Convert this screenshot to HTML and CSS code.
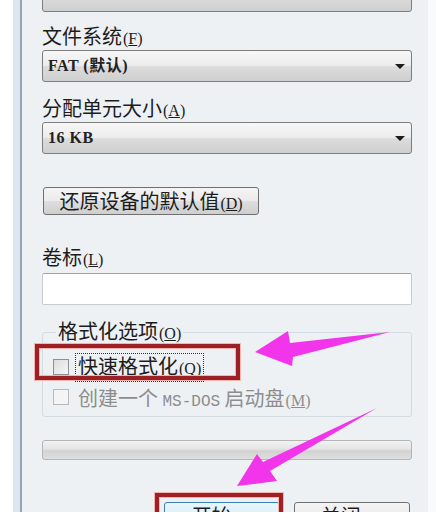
FILE: index.html
```html
<!DOCTYPE html>
<html lang="zh-CN">
<head>
    <meta charset="UTF-8">
    <meta name="viewport" content="width=device-width, initial-scale=1.0">
    <title>格式化</title>
    <link rel="stylesheet" href="styles.css">
</head>
<body>
    <div class="window">
        <div class="frame-edge"></div>

        <div class="dialog">
            <!-- bottom of the capacity combo, scrolled off the top -->
            <div class="combo combo-cut"><span class="arrow"></span></div>

            <div class="label first">文件系统<span class="key">(<u>F</u>)</span></div>
            <div class="combo"><span class="value">FAT (默认)</span><span class="arrow"></span></div>

            <div class="label">分配单元大小<span class="key">(<u>A</u>)</span></div>
            <div class="combo"><span class="value">16 KB</span><span class="arrow"></span></div>

            <button class="btn restore">还原设备的默认值<span class="key">(<u>D</u>)</span></button>

            <div class="label volume">卷标<span class="key">(<u>L</u>)</span></div>
            <div class="textbox"></div>

            <fieldset class="group">
                <legend>格式化选项<span class="key">(<u>O</u>)</span></legend>
                <div class="check-row">
                    <span class="checkbox"></span>
                    <span class="focus">快速格式化<span class="key">(<u>Q</u>)</span></span>
                </div>
                <div class="check-row disabled">
                    <span class="checkbox"></span>
                    <span class="text">创建一个 <span class="latin">MS-DOS</span> 启动盘<span class="key">(<u>M</u>)</span></span>
                </div>
            </fieldset>

            <div class="progress"></div>

            <div class="actions">
                <button class="btn start">开始<span class="key">(<u>S</u>)</span></button>
                <button class="btn">关闭<span class="key">(<u>C</u>)</span></button>
            </div>
        </div>

        <div class="frame-right"></div>

        <!-- tutorial annotations drawn over the dialog -->
        <svg class="marks" width="436" height="512" viewBox="0 0 436 512">
            <rect x="37" y="346" width="201" height="32" fill="none" stroke="#f3b5b0" stroke-width="6"/>
            <rect x="37" y="346" width="201" height="32" fill="none" stroke="#9e2024" stroke-width="4"/>
            <rect x="157" y="495" width="124" height="30" fill="none" stroke="#f3b5b0" stroke-width="6"/>
            <rect x="157" y="495" width="124" height="30" fill="none" stroke="#9e2024" stroke-width="4"/>
            <polygon points="255,352 288,331 290,343 390,332 293,357 292,366" fill="#f234ea"/>
            <polygon points="237,486 257,454 263,462 377,408 270,471 277,481" fill="#f234ea"/>
        </svg>
    </div>
</body>
</html>
```

FILE: styles.css
```css
body {
    margin: 0;
    background: #ffffff;
    font-family: "Noto Sans CJK SC", "Liberation Sans", sans-serif;
    color: #1c1c1c;
}

.window {
    position: relative;
    display: flex;
    height: 512px;
    overflow: hidden;
}

.frame-edge {
    width: 7px;
    margin-left: 13px;
    background: #dce6f1;
    border-right: 2px solid #93a3b4;
}

.frame-right {
    width: 8px;
    background: #f9fafc;
}

.dialog {
    width: 370px;
    padding: 0 16px 0 20px;
    background: #eef1f4;
    display: flex;
    flex-direction: column;
}
.dialog > * {
    flex-shrink: 0;
}

.label {
    font-size: 20px;
    line-height: 24px;
    height: 24px;
    margin-top: 14px;
    white-space: nowrap;
}
.label.first {
    margin-top: 12px;
}
.label.volume {
    margin-top: 30px;
}

.key {
    font-family: "Liberation Serif", serif;
    font-size: 16px;
    margin-left: 1px;
}

.combo {
    position: relative;
    height: 30px;
    margin-top: 2px;
    border: 1px solid #7d7d7d;
    border-radius: 3px;
    background: linear-gradient(#f7f7f7, #ececec 48%, #dcdcdc 52%, #cfcfcf);
}
.combo-cut {
    margin-top: -20px;
}
.combo .value {
    display: block;
    padding-left: 5px;
    line-height: 30px;
    font-family: "Liberation Serif", "Noto Sans CJK SC", serif;
    font-weight: bold;
    font-size: 16px;
    color: #222;
    letter-spacing: 0.5px;
}
.combo .arrow {
    position: absolute;
    right: 6px;
    top: 13px;
    border-left: 5px solid transparent;
    border-right: 5px solid transparent;
    border-top: 5px solid #1a1a1a;
}

.btn {
    height: 28px;
    padding: 0;
    border: 1px solid #707070;
    border-radius: 3px;
    background: linear-gradient(#f4f4f4, #ebebeb 48%, #dddddd 52%, #cfcfcf);
    font-family: "Noto Sans CJK SC", "Liberation Sans", sans-serif;
    font-size: 20px;
    line-height: 26px;
    color: #1c1c1c;
}
.restore {
    width: 216px;
    margin: 33px 0 0 1px;
}

.textbox {
    height: 30px;
    margin-top: 4px;
    background: #ffffff;
    border: 1px solid #c6cbd1;
    border-top-color: #9ea3a9;
    border-radius: 2px;
}

.group {
    margin: 15px 0 0;
    padding: 7px 0 4px 10px;
    border: 1px solid #d3dbe2;
    border-radius: 3px;
}
.group legend {
    margin-left: 3px;
    padding: 0 2px;
    font-size: 20px;
    line-height: 22px;
}

.check-row {
    display: flex;
    align-items: center;
    height: 30px;
    font-size: 20px;
    white-space: nowrap;
}
.checkbox {
    width: 14px;
    height: 14px;
    margin-right: 7px;
    border: 1px solid #8e8f8f;
    background: linear-gradient(135deg, #dcdcdc, #f6f6f6);
}
.focus {
    line-height: 24px;
    padding: 0 2px;
    outline: 1px dotted #333;
    outline-offset: 0;
}
.disabled {
    color: #8d8d8d;
}
.disabled .checkbox {
    border-color: #b8b8b8;
    background: #f4f4f4;
}
.disabled .text {
    padding-left: 2px;
}
.latin {
    font-family: "Liberation Mono", monospace;
    font-size: 16px;
}

.progress {
    height: 18px;
    margin-top: 23px;
    border: 1px solid #b5b5b5;
    border-radius: 3px;
    background: linear-gradient(#f2f2f2, #e4e4e4 45%, #d2d2d2 55%, #dedede);
}

.actions {
    display: flex;
    justify-content: flex-end;
    gap: 14px;
    margin-top: 42px;
    margin-right: 2px;
}
.actions .btn {
    width: 116px;
    height: 30px;
}
.actions .start {
    border-color: #3c7fb1;
    background: linear-gradient(#e8f5fc, #dcf0fb 48%, #c6e6f9 52%, #bde0f4);
}

.marks {
    position: absolute;
    left: 0;
    top: 0;
}
```
